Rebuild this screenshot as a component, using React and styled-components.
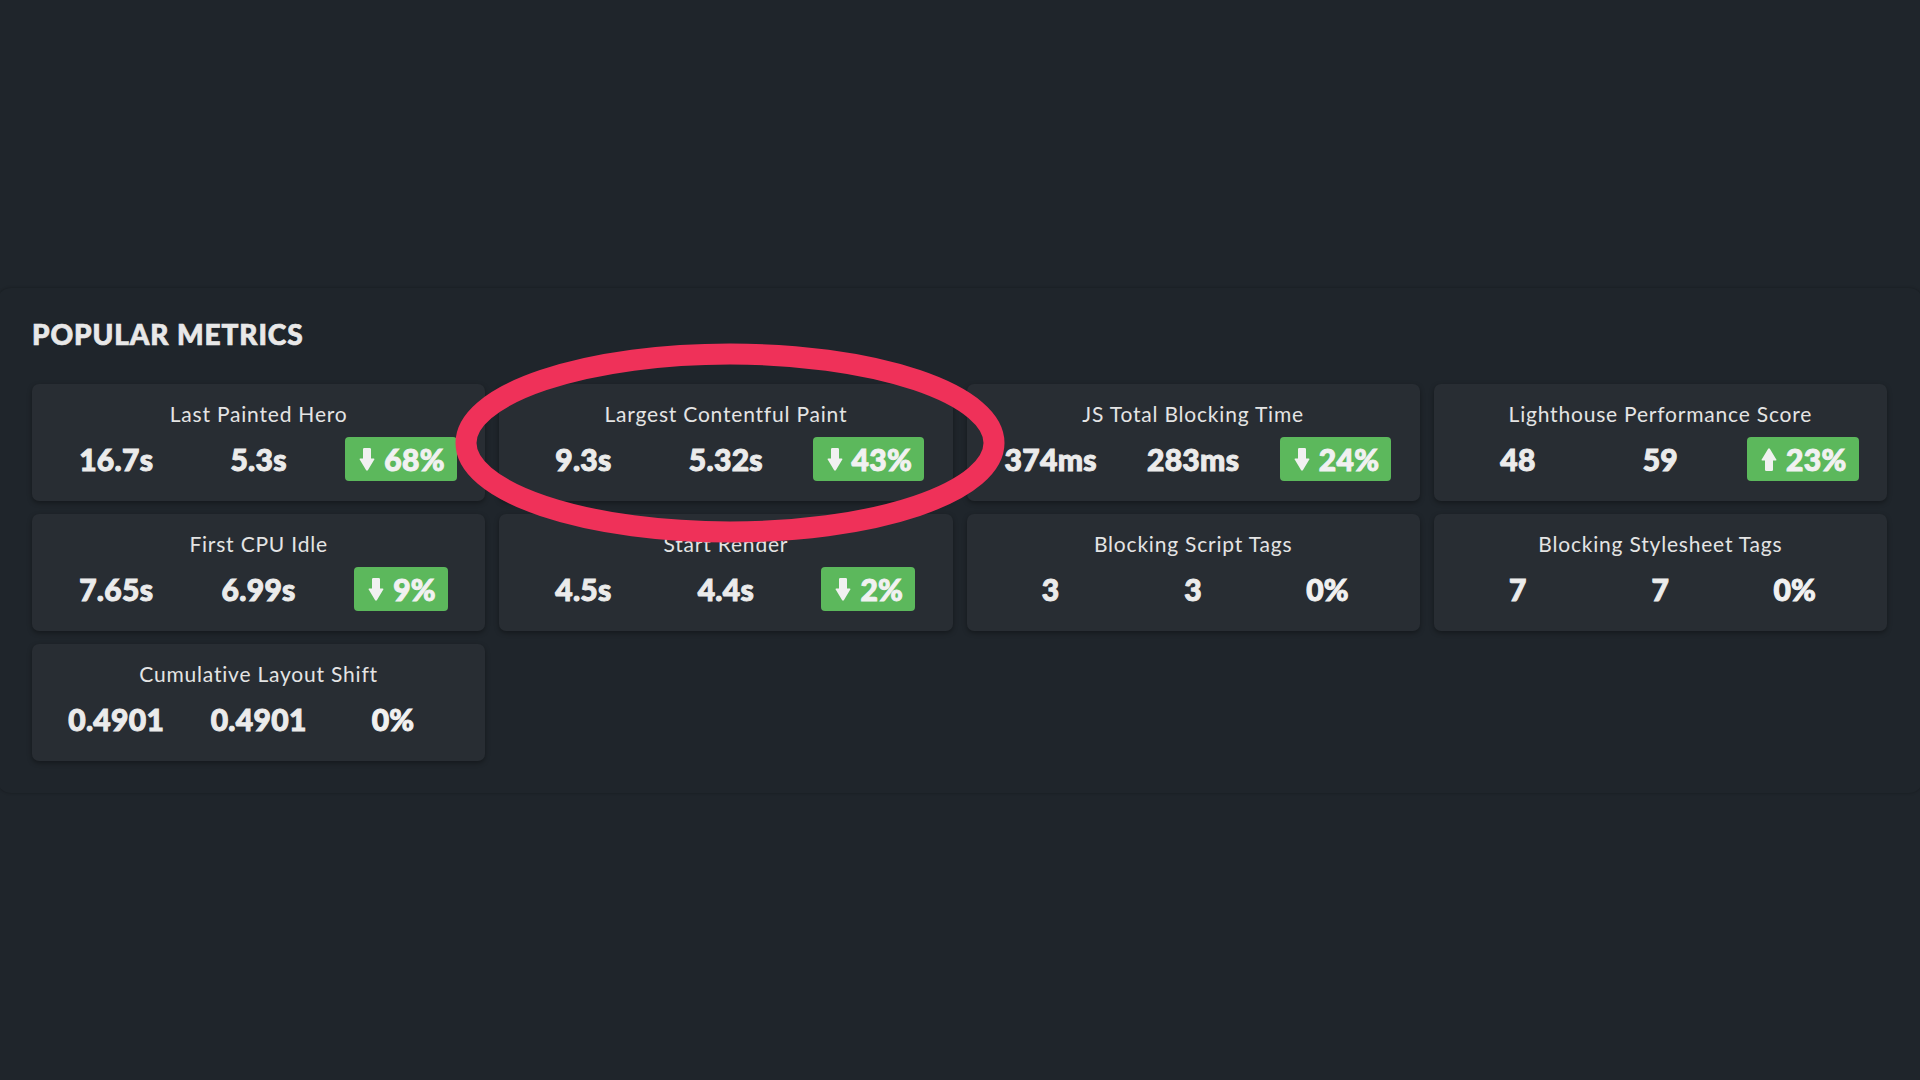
import React from "react";
import styled, { createGlobalStyle } from "styled-components";

const Global = createGlobalStyle`
  html, body {
    margin: 0;
    padding: 0;
    background: #1f252b;
    overflow: hidden;
  }
  body {
    font-family: Lato, "Noto Sans", sans-serif;
    color: #e9e9e9;
  }
`;

const Page = styled.div`
  width: 1920px;
  height: 1080px;
  background: #1f252b;
  padding-top: 288px;
  box-sizing: border-box;
`;

const Panel = styled.section`
  position: relative;
  margin: 0 -3px;
  padding: 29px 36px 32px 35px;
  background: #1f252b;
  border-radius: 14px;
  box-shadow: 0 0 3px rgba(0, 0, 0, 0.28);
`;

const Heading = styled.h2`
  margin: 0 0 33px;
  font-family: Lato, sans-serif;
  font-weight: 900;
  font-size: 28px;
  line-height: 34px;
  letter-spacing: 0.9px;
  color: #e8e8e8;
  -webkit-text-stroke: 0.7px #e8e8e8;
`;

const Grid = styled.div`
  display: grid;
  grid-template-columns: repeat(4, 1fr);
  column-gap: 14px;
  row-gap: 13px;
`;

const Card = styled.div`
  height: 117px;
  box-sizing: border-box;
  padding: 17px 13px 20px;
  background: #282d33;
  border-radius: 7px;
  box-shadow: 0 2px 5px rgba(0, 0, 0, 0.35);
  display: flex;
  flex-direction: column;
  gap: 10px;
`;

const Title = styled.div`
  text-align: center;
  font-family: Lato, sans-serif;
  font-weight: 400;
  font-size: 21px;
  line-height: 26px;
  letter-spacing: 0.8px;
  color: #e4e4e4;
  white-space: nowrap;
`;

const Values = styled.div`
  display: grid;
  grid-template-columns: repeat(3, 1fr);
  align-items: center;
  height: 44px;
`;

const Value = styled.div`
  text-align: center;
  font-family: Lato, sans-serif;
  font-weight: 900;
  font-size: 30px;
  line-height: 44px;
  letter-spacing: 0.3px;
  color: #ebebeb;
  -webkit-text-stroke: 1px #ebebeb;
  white-space: nowrap;
`;

const BadgeCell = styled.div`
  display: flex;
  justify-content: center;
`;

const Badge = styled.div`
  display: inline-flex;
  align-items: center;
  gap: 9px;
  height: 44px;
  box-sizing: border-box;
  padding: ${(p) => (p.$neutral ? "0 30px 0 14px" : "0 12px 0 14px")};
  border-radius: 4px;
  background: ${(p) => (p.$neutral ? "transparent" : "#5cb85c")};
  font-family: Lato, sans-serif;
  font-weight: 900;
  font-size: 30px;
  line-height: 44px;
  letter-spacing: 0.3px;
  color: #f1f1f1;
  -webkit-text-stroke: 1px #f1f1f1;
  white-space: nowrap;
`;

const ArrowSvg = styled.svg`
  display: block;
  flex: none;
  width: 16px;
  height: 23px;
  transform: ${(p) => (p.$up ? "rotate(180deg)" : "none")};
`;

const Annotation = styled.svg`
  position: absolute;
  left: 458px;
  top: 55px;
  pointer-events: none;
`;

const Arrow = ({ up }) => (
  <ArrowSvg $up={up} viewBox="0 0 16 23">
    <path
      d="M4 1.3 Q4 0 5.3 0 H10.7 Q12 0 12 1.3 V10.5 H14.8 Q16 10.5 15.3 11.5 L9 22 Q8 23.4 7 22 L0.7 11.5 Q0 10.5 1.2 10.5 H4 Z"
      fill="#f1f1f1"
    />
  </ArrowSvg>
);

const metrics = [
  { title: "Last Painted Hero", a: "16.7s", b: "5.3s", pct: "68%", dir: "down" },
  { title: "Largest Contentful Paint", a: "9.3s", b: "5.32s", pct: "43%", dir: "down" },
  { title: "JS Total Blocking Time", a: "374ms", b: "283ms", pct: "24%", dir: "down" },
  { title: "Lighthouse Performance Score", a: "48", b: "59", pct: "23%", dir: "up" },
  { title: "First CPU Idle", a: "7.65s", b: "6.99s", pct: "9%", dir: "down" },
  { title: "Start Render", a: "4.5s", b: "4.4s", pct: "2%", dir: "down" },
  { title: "Blocking Script Tags", a: "3", b: "3", pct: "0%" },
  { title: "Blocking Stylesheet Tags", a: "7", b: "7", pct: "0%" },
  { title: "Cumulative Layout Shift", a: "0.4901", b: "0.4901", pct: "0%" },
];

export default function App() {
  return (
    <Page>
      <Global />
      <Panel>
        <Heading>POPULAR METRICS</Heading>
        <Grid>
          {metrics.map((m) => (
            <Card key={m.title}>
              <Title>{m.title}</Title>
              <Values>
                <Value>{m.a}</Value>
                <Value>{m.b}</Value>
                <BadgeCell>
                  <Badge $neutral={!m.dir}>
                    {m.dir && <Arrow up={m.dir === "up"} />}
                    {m.pct}
                  </Badge>
                </BadgeCell>
              </Values>
            </Card>
          ))}
        </Grid>
        <Annotation width="550" height="200" viewBox="0 0 550 200">
          <ellipse
            cx="275"
            cy="100"
            rx="264"
            ry="89"
            fill="none"
            stroke="#ef3159"
            strokeWidth="21"
          />
        </Annotation>
      </Panel>
    </Page>
  );
}
